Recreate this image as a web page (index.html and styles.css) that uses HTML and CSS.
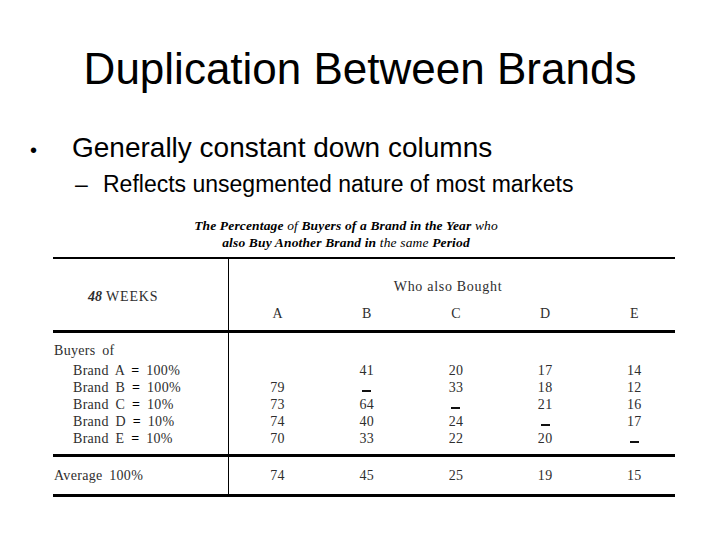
FILE: index.html
```html
<!DOCTYPE html>
<html>
<head>
<meta charset="utf-8">
<link rel="stylesheet" href="styles.css">
</head>
<body>
<div class="slide">
  <h1 class="title">Duplication Between Brands</h1>
  <ul class="points">
    <li class="point"><span class="bullet">•</span><span>Generally constant down columns</span></li>
    <li class="subpoint"><span class="dash">–</span><span>Reflects unsegmented nature of most markets</span></li>
  </ul>
  <div class="figure">
    <div class="caption">The Percentage <span class="thin">of</span> Buyers of a Brand in the Year <span class="thin">who</span><br>also Buy Another Brand in <span class="thin">the same</span> Period</div>
    <table class="dup">
      <colgroup><col class="c-label"><col><col><col><col><col></colgroup>
      <thead>
        <tr>
          <th class="weeks" rowspan="2"><b><i>48</i></b> WEEKS</th>
          <th class="who" colspan="5">Who also Bought</th>
        </tr>
        <tr class="letters">
          <th>A</th><th>B</th><th>C</th><th>D</th><th>E</th>
        </tr>
      </thead>
      <tbody>
        <tr class="buyers"><td class="lab">Buyers of</td><td></td><td></td><td></td><td></td><td></td></tr>
        <tr><td class="lab brand">Brand A <b class="eq">=</b> 100%</td><td></td><td>41</td><td>20</td><td>17</td><td>14</td></tr>
        <tr><td class="lab brand">Brand B <b class="eq">=</b> 100%</td><td>79</td><td><span class="nil"></span></td><td>33</td><td>18</td><td>12</td></tr>
        <tr><td class="lab brand">Brand C <b class="eq">=</b> 10%</td><td>73</td><td>64</td><td><span class="nil"></span></td><td>21</td><td>16</td></tr>
        <tr><td class="lab brand">Brand D <b class="eq">=</b> 10%</td><td>74</td><td>40</td><td>24</td><td><span class="nil"></span></td><td>17</td></tr>
        <tr class="last"><td class="lab brand">Brand E <b class="eq">=</b> 10%</td><td>70</td><td>33</td><td>22</td><td>20</td><td><span class="nil"></span></td></tr>
      </tbody>
      <tfoot>
        <tr class="avg"><td class="lab">Average 100%</td><td>74</td><td>45</td><td>25</td><td>19</td><td>15</td></tr>
      </tfoot>
    </table>
  </div>
</div>
</body>
</html>
```
FILE: styles.css
```css
body {
  margin: 0;
  background: #fff;
}

.slide {
  width: 720px;
  height: 540px;
  overflow: hidden;
  font-family: "Liberation Sans", Arial, sans-serif;
  color: #000;
}

.title {
  margin: 0;
  padding-top: 44px;
  font-size: 44px;
  line-height: 50px;
  font-weight: normal;
  text-align: center;
}

.points {
  list-style: none;
  margin: 37px 0 0;
  padding: 0;
}

.point {
  display: flex;
  align-items: baseline;
  font-size: 28px;
  line-height: 34px;
  padding-left: 30px;
}

.bullet {
  width: 42px;
  font-size: 20px;
}

.subpoint {
  display: flex;
  align-items: baseline;
  font-size: 23px;
  line-height: 30px;
  padding-left: 75px;
  margin-top: 2px;
}

.dash {
  width: 28px;
}

.figure {
  margin-top: 18px;
  margin-left: 53px;
  width: 622px;
}

.caption {
  font-family: "Liberation Serif", "Times New Roman", serif;
  font-style: italic;
  font-weight: bold;
  font-size: 13.5px;
  line-height: 17px;
  text-align: center;
  padding-right: 36px;
  letter-spacing: 0.15px;
}

.caption .thin {
  font-weight: normal;
}

.dup {
  width: 622px;
  margin-top: 6px;
  border-collapse: separate;
  border-spacing: 0;
  table-layout: fixed;
  border-top: 2px solid #000;
  font-family: "Liberation Serif", "Times New Roman", serif;
  font-size: 14px;
  line-height: 17px;
  color: #2e2e2e;
  letter-spacing: 0.3px;
}

.c-label {
  width: 176px;
}

.dup th,
.dup td {
  padding: 0;
  font-weight: normal;
  text-align: center;
  padding-left: 8px;
}

.dup .weeks,
.dup .lab {
  text-align: left;
  border-right: 1px solid #000;
}

.dup .weeks {
  padding-left: 35px;
  padding-top: 4px;
  vertical-align: middle;
  border-bottom: 3px solid #000;
  letter-spacing: 0.8px;
}

.dup .weeks i {
  letter-spacing: 0;
}

.dup .who {
  padding: 19px 8px 5px 0;
  font-size: 14px;
  letter-spacing: 0.7px;
}

.letters th {
  padding-top: 5px;
  padding-bottom: 8px;
  border-bottom: 3px solid #000;
}

.dup .lab {
  padding-left: 1px;
  word-spacing: 3px;
}

.dup .brand {
  padding-left: 20px;
}

.eq {
  color: #000;
}

.buyers td {
  padding-top: 9px;
  padding-bottom: 3px;
}

.last td {
  padding-bottom: 7px;
  border-bottom: 3px solid #000;
}

.avg td {
  padding-top: 10px;
  padding-bottom: 10px;
  border-bottom: 3px solid #000;
}

.nil {
  display: inline-block;
  width: 9px;
  height: 2.5px;
  background: #111;
  vertical-align: baseline;
}
```
